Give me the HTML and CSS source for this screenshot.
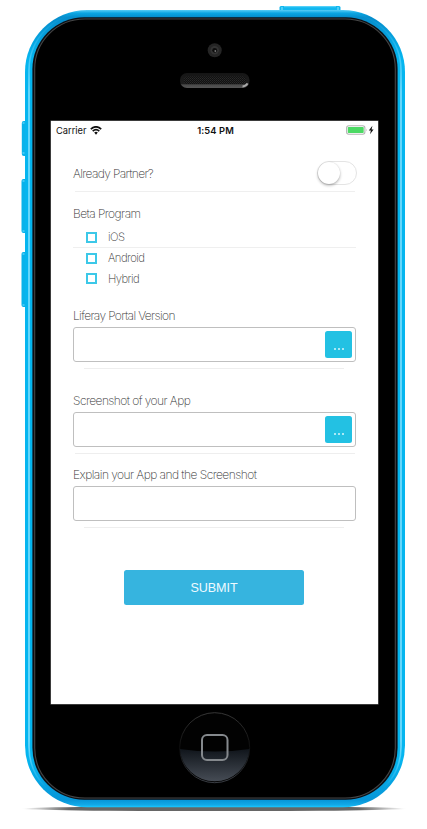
FILE: index.html
```html
<!DOCTYPE html>
<html lang="en">
<head>
<meta charset="utf-8">
<title>Beta Program</title>
<link rel="stylesheet" href="styles.css">
</head>
<body>
<div class="device">
  <svg class="shell" width="427" height="829" viewBox="0 0 427 829" aria-hidden="true">
    <defs>
      <linearGradient id="edge" x1="0" y1="0" x2="0" y2="1">
        <stop offset="0" stop-color="#58cdf6"/><stop offset=".004" stop-color="#0aa5e2"/><stop offset=".009" stop-color="#058dcc"/>
        <stop offset=".06" stop-color="#05b5ef"/><stop offset=".94" stop-color="#05b5ef"/><stop offset=".991" stop-color="#0796d8"/><stop offset=".997" stop-color="#12a9e8"/><stop offset="1" stop-color="#1bcaff"/>
      </linearGradient>
      <linearGradient id="shine" x1="0" y1="0" x2="0" y2="1">
        <stop offset="0" stop-color="#6dd8ff" stop-opacity="0"/><stop offset=".03" stop-color="#6dd8ff" stop-opacity=".2"/><stop offset=".1" stop-color="#83e1ff"/><stop offset=".92" stop-color="#83e1ff"/><stop offset=".98" stop-color="#6dd8ff" stop-opacity="0"/>
      </linearGradient>
      <linearGradient id="floor" x1="0" y1="0" x2="1" y2="0">
        <stop offset="0" stop-color="#555" stop-opacity="0"/><stop offset=".12" stop-color="#555" stop-opacity=".9"/><stop offset=".88" stop-color="#555" stop-opacity=".9"/><stop offset="1" stop-color="#555" stop-opacity="0"/>
      </linearGradient>
      <linearGradient id="home" x1="0" y1="0" x2="0" y2="1">
        <stop offset="0" stop-color="#10151b"/><stop offset="1" stop-color="#464c55"/>
      </linearGradient>
      <linearGradient id="homeRim" x1="0" y1="0" x2="0" y2="1">
        <stop offset="0" stop-color="#444"/><stop offset=".5" stop-color="#111"/><stop offset="1" stop-color="#484d55"/>
      </linearGradient>
      <linearGradient id="speaker" x1="0" y1="0" x2="0" y2="1">
        <stop offset="0" stop-color="#151515"/><stop offset=".7" stop-color="#1e1e1e"/><stop offset=".8" stop-color="#4a4a4a"/><stop offset="1" stop-color="#555"/>
      </linearGradient>
      <pattern id="mesh" width="2" height="2" patternUnits="userSpaceOnUse"><rect width="2" height="2" fill="#111"/><rect width="1" height="1" fill="#2a2a2a"/><rect x="1" y="1" width="1" height="1" fill="#222"/></pattern>
      <filter id="soft" x="-5%" y="-200%" width="110%" height="500%" color-interpolation-filters="sRGB"><feGaussianBlur stdDeviation="1.5 .7"/></filter>
    </defs>
    <ellipse cx="214" cy="808.7" rx="191" ry="2.4" fill="url(#floor)" filter="url(#soft)"/>
    <rect x="279.5" y="6" width="61" height="7" rx="1.5" fill="#10b7ef"/>
    <path d="M284 6.7h52" stroke="#62d6fb"/>
    <path d="M282 7v3M338 7v3" stroke="#8be4ff"/>
    <g fill="#08b2ea">
      <rect x="21.8" y="121" width="6" height="35" rx="2"/>
      <rect x="21.5" y="179" width="6" height="54" rx="2"/>
      <rect x="21.5" y="252" width="6" height="55" rx="2"/>
    </g>
    <g stroke="#7edfff" stroke-width="1.2"><path d="M22.5 123h2M22.5 153h2M22.5 181h2M22.5 231h2M22.5 254h2M22.5 305h2"/></g>
    <rect x="25" y="10" width="380" height="797.3" rx="62" fill="url(#edge)"/>
    <rect x="29" y="13" width="372" height="791" rx="57" fill="none" stroke="url(#shine)" stroke-width="1.5"/>
    <rect x="32.4" y="17.2" width="365.2" height="782.6" rx="52" fill="#0c0f14"/>
    <rect x="34.7" y="19" width="360.6" height="779" rx="50" fill="#000" stroke="#454545" stroke-width="1.1"/>
    <circle cx="214.7" cy="50.3" r="7" fill="#252525"/>
    <circle cx="214.7" cy="50.3" r="4.2" fill="#333"/>
    <circle cx="214.7" cy="50.3" r="2.4" fill="#0d0d0d"/>
    <circle cx="215.3" cy="51" r=".9" fill="#777"/>
    <rect x="180" y="73" width="69.5" height="15" rx="7" fill="url(#speaker)"/>
    <rect x="184" y="76.5" width="62" height="7.5" rx="3.5" fill="url(#mesh)"/>
    <path d="M242.5 86.4q3.5-.2 5-3" fill="none" stroke="#aaa" stroke-width="2"/>
    <circle cx="214.7" cy="747.7" r="35" fill="#020202" stroke="url(#homeRim)" stroke-width=".8"/>
    <path d="M179.8 749q35 5 69.8 0a35 35 0 0 1-69.8 0z" fill="url(#home)"/>
    <rect x="202" y="735" width="25.5" height="25" rx="5" fill="none" stroke="#85898d" stroke-width="2"/>
  </svg>

  <main class="screen">
    <header class="status">
      <span class="carrier">Carrier
        <svg width="12" height="9" viewBox="0 0 12 9" fill="none" stroke="#111" stroke-width="1.7"><path d="M.8 3.2Q6-1.6 11.2 3.2M2.7 5.2Q6 2.2 9.3 5.2"/><path d="M4.2 6.5Q6 5 7.8 6.5L6 8.7z" fill="#111" stroke="none"/></svg>
      </span>
      <span class="time">1:54 PM</span>
      <span class="power">
        <svg width="29" height="10" viewBox="0 0 29 10"><rect x=".6" y=".7" width="18.3" height="8.5" rx="2.2" fill="#fff" stroke="#b5b5b5" stroke-width="1.1"/><rect x="1.8" y="1.9" width="15.9" height="6.1" rx=".8" fill="#4cd964"/><path d="M20 3.4q1.2 1.5 0 3" fill="#aaa"/><path d="M26.4.8 22.8 5.4h2.1L24 9.2l3.6-4.8h-2z" fill="#111"/></svg>
      </span>
    </header>

    <form class="form">
      <div class="partner">
        <span class="label">Already Partner?</span>
        <span class="switch"><span class="knob"></span></span>
      </div>

      <section class="beta">
        <h2 class="label">Beta Program</h2>
        <div class="option first"><span class="box"></span><span class="name">iOS</span></div>
        <div class="option"><span class="box"></span><span class="name">Android</span></div>
        <div class="option"><span class="box"></span><span class="name">Hybrid</span></div>
      </section>

      <section class="field version">
        <div class="label">Liferay Portal Version</div>
        <div class="input"><button type="button" class="pick" aria-label="Choose"><i></i><i></i><i></i></button></div>
        <div class="rule short"></div>
      </section>

      <section class="field shot">
        <div class="label">Screenshot of your App</div>
        <div class="input"><button type="button" class="pick" aria-label="Choose"><i></i><i></i><i></i></button></div>
        <div class="rule"></div>
      </section>

      <section class="field explain">
        <div class="label">Explain your App and the Screenshot</div>
        <div class="input"></div>
        <div class="rule short"></div>
      </section>

      <button type="button" class="submit">SUBMIT</button>
    </form>
  </main>
</div>
</body>
</html>
```
FILE: styles.css
```css
* { box-sizing: border-box; }
body { margin: 0; background: #fff; font-family: Inter, "Liberation Sans", sans-serif; }
button { font: inherit; border: 0; padding: 0; }

.device { position: relative; width: 427px; height: 829px; padding: 121px 49px 0 51px; overflow: hidden; }
.shell { position: absolute; inset: 0; display: block; }
.screen { position: relative; width: 327px; height: 583px; background: #fff; box-shadow: 0 0 0 .5px #777; }

.status { display: grid; grid-template-columns: 1fr auto 1fr; align-items: center; height: 18px; padding: 0 3px 0 5px; font-size: 9.3px; color: #111; }
.carrier { display: flex; align-items: center; gap: 4px; letter-spacing: 0; }
.time { font-weight: 600; letter-spacing: .12px; }
.power { display: flex; justify-content: flex-end; }

.form { padding: 0 22px; color: #333; }
.label { margin: 0; height: 16px; line-height: 16px; font-size: 12px; font-weight: 250; letter-spacing: -.64px; white-space: nowrap; }

.partner { display: flex; justify-content: space-between; align-items: center; height: 53px; margin: 0 1px 0 0; padding-top: 14px; background: linear-gradient(#efefef, #efefef) 2px 100% / 100% 1px no-repeat; }
.partner .label { margin-top: 2px; }
.switch { width: 40px; height: 24px; margin-right: -2px; border: 1px solid #e4e4e4; border-radius: 12px; }
.knob { display: block; width: 22px; height: 22px; border-radius: 50%; background: #fff; box-shadow: 0 1.5px 3px rgba(0,0,0,.3), 0 0 1px rgba(0,0,0,.12); }

.beta { padding-top: 14px; }
.beta .label { letter-spacing: -.57px; }
.option { display: flex; align-items: center; height: 20.5px; padding-left: 13px; font-size: 11.3px; font-weight: 250; letter-spacing: -.55px; }
.option.first { height: 26px; padding-top: 5px; border-bottom: 1px solid #efefef; }
.box { width: 11px; height: 11px; margin-right: 11px; border: 2px solid #3cc8e8; }

.field .input { display: flex; justify-content: flex-end; width: 283px; height: 35px; padding: 3px; border: 1px solid #bfbfbf; border-radius: 3px; }
.version { margin-top: 19px; }
.version .input { margin-top: 3px; }
.shot { margin-top: 24px; }
.shot .label { letter-spacing: -.57px; }
.shot .input { margin-top: 3px; }
.explain { margin-top: 13px; }
.explain .label { letter-spacing: -.55px; }
.explain .input { margin-top: 3px; }
.rule { height: 1px; margin: 6px 1px 0 2px; background: #eee; }
.rule.short { margin-left: 11px; margin-right: 12px; }

.pick { display: flex; justify-content: center; align-items: flex-end; gap: 2px; width: 27px; height: 27px; padding-bottom: 8px; border-radius: 2.5px; background: #23c1e3; }
.pick i { width: 2px; height: 2px; border-radius: 1px; background: #d9f5fb; }

.submit { display: block; width: 180px; height: 35px; margin: 42px auto 0 51px; border-radius: 2.5px; background: #36b4df; color: #eefaff; font-family: "Liberation Sans", sans-serif; font-size: 12.6px; letter-spacing: -.1px; }
```
